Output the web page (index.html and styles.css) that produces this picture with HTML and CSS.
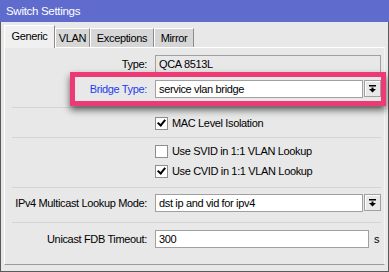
FILE: index.html
```html
<!DOCTYPE html>
<html>
<head>
    <title>Switch Settings</title>
    <link rel="stylesheet" href="styles.css">
</head>
<body>
    <div class="window">
        <div class="titlebar">Switch Settings</div>
        <div class="content">
            <div class="tabs">
                <div class="tab active tab-generic">Generic</div>
                <div class="tab tab-vlan">VLAN</div>
                <div class="tab tab-exceptions">Exceptions</div>
                <div class="tab tab-mirror">Mirror</div>
            </div>
            <div class="panel">
                <div class="section first">
                    <div class="row">
                        <label class="label">Type:</label>
                        <div class="field readonly">QCA 8513L</div>
                    </div>
                    <div class="row">
                        <label class="label highlight-label">Bridge Type:</label>
                        <div class="combo">
                            <div class="field">service vlan bridge</div>
                            <div class="drop">
                                <svg width="7" height="8" viewBox="0 0 7 8"><rect x="0" y="0" width="7" height="1.5" fill="#000"/><rect x="2.5" y="2.5" width="2" height="2" fill="#000"/><polygon points="0,4 7,4 3.5,7.5" fill="#000"/></svg>
                            </div>
                        </div>
                    </div>
                </div>
                <div class="section mac">
                    <div class="row check-row">
                        <span></span>
                        <label class="check"><span class="box checked"></span>MAC Level Isolation</label>
                    </div>
                </div>
                <div class="section lookup">
                    <div class="row check-row">
                        <span></span>
                        <label class="check"><span class="box"></span>Use SVID in 1:1 VLAN Lookup</label>
                    </div>
                    <div class="row check-row">
                        <span></span>
                        <label class="check"><span class="box checked"></span>Use CVID in 1:1 VLAN Lookup</label>
                    </div>
                </div>
                <div class="section multicast">
                    <div class="row">
                        <label class="label">IPv4 Multicast Lookup Mode:</label>
                        <div class="combo">
                            <div class="field">dst ip and vid for ipv4</div>
                            <div class="drop">
                                <svg width="7" height="8" viewBox="0 0 7 8"><rect x="0" y="0" width="7" height="1.5" fill="#000"/><rect x="2.5" y="2.5" width="2" height="2" fill="#000"/><polygon points="0,4 7,4 3.5,7.5" fill="#000"/></svg>
                            </div>
                        </div>
                    </div>
                </div>
                <div class="section last">
                    <div class="row">
                        <label class="label">Unicast FDB Timeout:</label>
                        <div class="unit-field">
                            <div class="field">300</div>
                            <span class="unit">s</span>
                        </div>
                    </div>
                </div>
            </div>
        </div>
        <div class="highlight"></div>
    </div>
</body>
</html>
```

FILE: styles.css
```css
/* Winbox-style dialog */
:root {
    --title: #5f6bcd;
    --face: #e8e8e8;
    --tab-off: #d6d6d6;
    --edge: #a0a0a0;
    --line: #d4d4d4;
    --pink: #ee3a74;
    --blue: #1f3cf0;
}
body { margin: 0; font-family: 'Liberation Sans', Arial, sans-serif; font-size: 11px; letter-spacing: -0.35px; color: #000; }
.window { position: relative; width: 389px; height: 272px; box-sizing: border-box; background: var(--face); border: 1px solid #5a5a5a; border-top: none; }
.titlebar { height: 22px; line-height: 23px; background: var(--title); color: #fff; margin: 0 -1px; padding-left: 6px; font-size: 11.5px; letter-spacing: -0.3px; }
.content { padding: 3px 3px 0 3px; }
.tabs { display: flex; align-items: flex-end; height: 22px; }
.tab { box-sizing: border-box; height: 19px; line-height: 18px; text-align: center; background: var(--tab-off); border-top: 1px solid #fff; border-left: 1px solid #fff; border-right: 1px solid #8c8c8c; }
.tab.active { height: 23px; line-height: 20px; background: #f0f0f0; position: relative; z-index: 1; margin-bottom: -1px; }
.tab-generic { width: 51px; }
.tab-vlan { width: 35px; }
.tab-exceptions { width: 64px; }
.tab-mirror { width: 40px; }
.panel { box-sizing: border-box; width: 381px; height: 218px; border: 1px solid #fff; border-bottom-color: #9a9a9a; border-right-color: #f4f4f4; padding: 0 3px 0 7px; }
.section { border-bottom: 1px solid var(--line); display: flex; flex-direction: column; }
.section.first { padding: 7px 0 9px; gap: 7px; }
.section.mac { padding: 9px 0 7px; }
.section.lookup { padding: 7px 0 9px; gap: 7px; }
.section.multicast { padding: 6px 0 10px; }
.section.last { padding: 7px 0 0; border-bottom: none; }
.row { display: grid; grid-template-columns: 135px 1fr; column-gap: 8px; align-items: center; height: 18px; }
.check-row { height: 13px; }
.label { text-align: right; white-space: nowrap; }
.highlight-label { color: var(--blue); }
.field { box-sizing: border-box; height: 18px; line-height: 16px; padding-left: 3px; background: #fff; border: 1px solid var(--edge); white-space: nowrap; overflow: hidden; }
.field.readonly { background: var(--face); }
.combo { display: flex; gap: 1px; }
.combo .field { flex: 1; }
.drop { box-sizing: border-box; width: 17px; height: 17px; border: 1px solid var(--edge); box-shadow: inset 1px 1px 0 #fff; background: var(--face); display: flex; align-items: center; justify-content: center; }
.unit-field { display: flex; align-items: center; gap: 5px; }
.unit-field .field { width: 214px; }
.check { display: flex; align-items: center; gap: 4px; white-space: nowrap; line-height: 13px; }
.box { box-sizing: border-box; width: 13px; height: 13px; background: #fff; border: 1px solid #8e8e8e; position: relative; }
.box.checked::after { content: ""; position: absolute; left: 3px; top: 0px; width: 3px; height: 6px; border: solid #000; border-width: 0 2px 2px 0; transform: rotate(40deg); }
.highlight { position: absolute; left: 69px; top: 72px; width: 316px; height: 34px; box-sizing: border-box; border: 5px solid var(--pink); box-shadow: 0 4px 7px rgba(0, 0, 0, 0.6); pointer-events: none; }
```
